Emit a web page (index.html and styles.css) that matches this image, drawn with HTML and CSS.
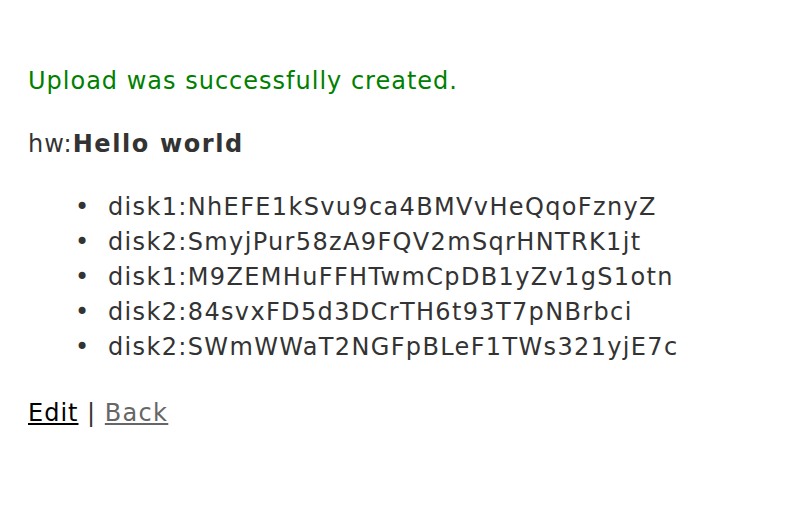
FILE: index.html
```html
<!DOCTYPE html>
<html>
<head>
<meta charset="utf-8">
<link rel="stylesheet" href="styles.css">
</head>
<body>
<div class="page">
<p class="notice">Upload was successfully created.</p>
<p class="line">hw:<strong>Hello world</strong></p>
<ul class="disks">
<li>disk1:NhEFE1kSvu9ca4BMVvHeQqoFznyZ</li>
<li>disk2:SmyjPur58zA9FQV2mSqrHNTRK1jt</li>
<li>disk1:M9ZEMHuFFHTwmCpDB1yZv1gS1otn</li>
<li>disk2:84svxFD5d3DCrTH6t93T7pNBrbci</li>
<li>disk2:SWmWWaT2NGFpBLeF1TWs321yjE7c</li>
</ul>
<p class="links"><a href="#" class="edit">Edit</a> | <a href="#" class="back">Back</a></p>
</div>
</body>
</html>
```
FILE: styles.css
```css
html, body { margin: 0; padding: 0; background: #fff; }
.page {
  padding: 64px 28px 0 28px;
  color: #333;
  font-family: "DejaVu Sans", Verdana, sans-serif;
  font-size: 24px;
  line-height: 35px;
  letter-spacing: 1px;
}
.page p { margin: 0 0 28px 0; }
.notice { color: green; }
.line strong { letter-spacing: 1.6px; }
.disks { margin: 0 0 31px 0; padding-left: 80px; list-style: none; letter-spacing: 1.35px; }
.disks li::before {
  content: "•";
  display: inline-block;
  width: 24px;
  margin-left: -38px;
  margin-right: 14px;
  text-align: center;
  letter-spacing: 0;
}
.edit { color: #000; }
.back { color: #666; letter-spacing: 1.3px; }
```
